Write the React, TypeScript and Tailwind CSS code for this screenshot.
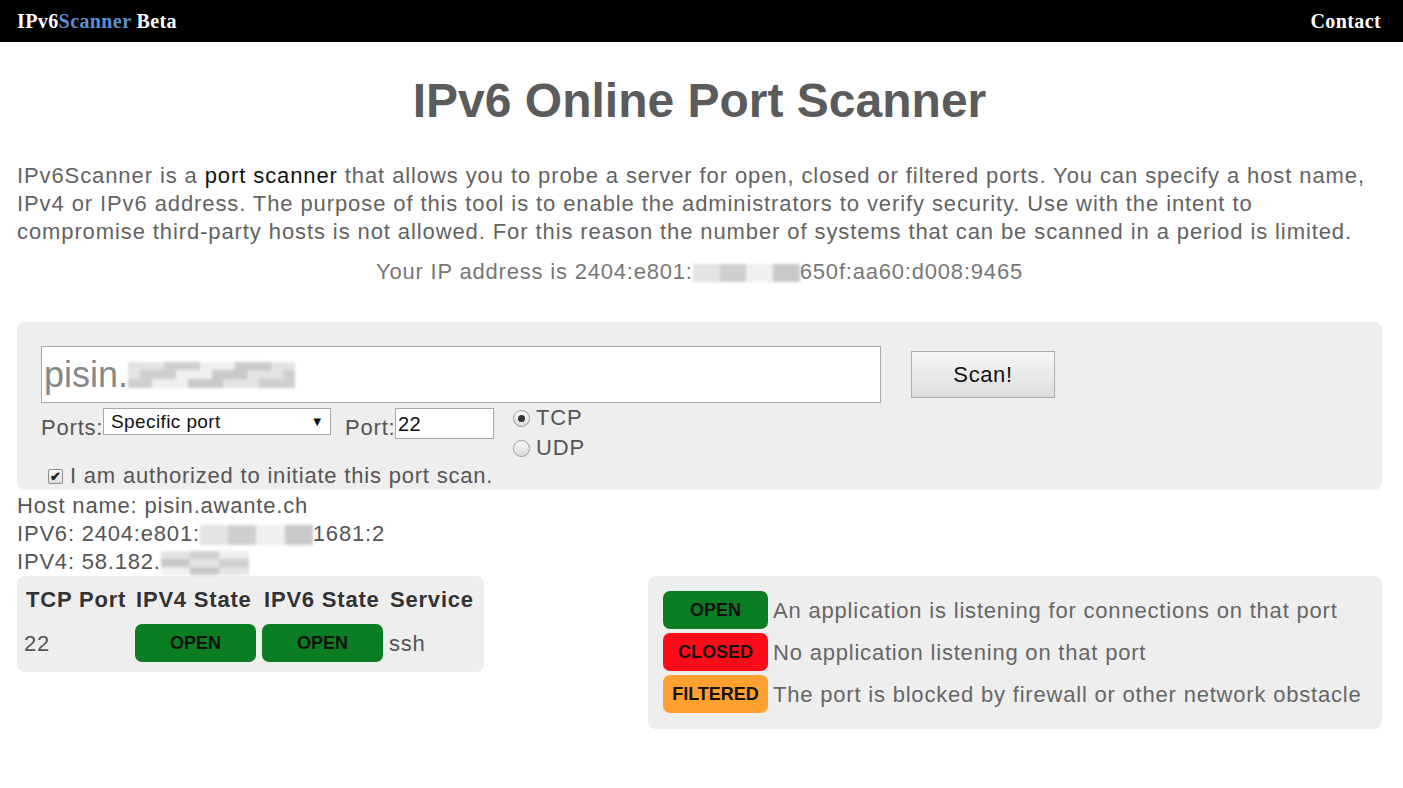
import React from "react";

const shades = ["#e3e3e3", "#d2d2d2", "#ececec", "#c9c9c9", "#e8e8e8", "#dadada", "#f0f0f0", "#d6d6d6", "#dedede", "#cfcfcf", "#e6e6e6", "#d8d8d8"];

function Blur({ cols, rows, className }: { cols: number; rows: number; className: string }) {
    const cells = Array.from({ length: cols * rows }, (_, i) => shades[(i * 7 + (i % 3) * 5) % shades.length]);
    return (
        <span className={`inline-grid align-middle blur-[1.5px] ${className}`} style={{ gridTemplateColumns: `repeat(${cols}, 1fr)` }}>
            {cells.map((c, i) => (
                <span key={i} style={{ background: c }} />
            ))}
        </span>
    );
}

function Badge({ label, color }: { label: string; color: string }) {
    return (
        <div className={`h-[38px] rounded-[7px] flex items-center justify-center font-bold text-[18px] text-[#111] ${color}`}>
            {label}
        </div>
    );
}

const legend = [
    { label: "OPEN", color: "bg-[#0b7d22]", text: "An application is listening for connections on that port" },
    { label: "CLOSED", color: "bg-[#ff0a1a]", text: "No application listening on that port" },
    { label: "FILTERED", color: "bg-[#ffa030]", text: "The port is blocked by firewall or other network obstacle" },
];

export default function App() {
    return (
        <div className="min-h-[788px] bg-white font-['Liberation_Sans',Arial,sans-serif]">
            <header className="h-[42px] bg-black flex items-center justify-between pl-[17px] pr-[22px] font-['Liberation_Serif','Times_New_Roman',serif] font-bold text-[20px] tracking-[0.4px] text-white">
                <div>
                    IPv6<span className="text-[#5b8fd0]">Scanner</span> Beta
                </div>
                <div>Contact</div>
            </header>

            <div className="pl-[17px] pr-[21px]">
                <h1 className="mt-[31px] text-center text-[48px] leading-[56px] font-bold text-[#5b5b5b]">IPv6 Online Port Scanner</h1>

                <p className="mt-[33px] pr-[10px] text-[22px] leading-[28px] tracking-[0.9px] text-[#636363]">
                    IPv6Scanner is a <span className="text-[#111]">port scanner</span> that allows you to probe a server for open, closed or filtered ports. You can specify a host name, IPv4 or IPv6 address. The purpose of this tool is to enable the administrators to verify security. Use with the intent to compromise third-party hosts is not allowed. For this reason the number of systems that can be scanned in a period is limited.
                </p>

                <p className="mt-[12px] text-center text-[22px] leading-[28px] tracking-[0.8px] text-[#777]">
                    Your IP address is 2404:e801:<Blur cols={12} rows={2} className="w-[107px] h-[18px]" />650f:aa60:d008:9465
                </p>

                <section className="mt-[36px] bg-[#eeeeee] rounded-[8px] pl-[24px] pt-[24px] h-[168px]">
                    <div className="flex items-start">
                        <div className="w-[840px] h-[57px] bg-white border border-[#a9a9a9] flex items-center pl-[2px] text-[36px] text-[#888]">
                            pisin.<Blur cols={14} rows={3} className="w-[167px] h-[26px]" />
                        </div>
                        <button className="ml-[30px] mt-[5px] w-[144px] h-[47px] border border-[#adadad] bg-gradient-to-b from-[#f7f7f7] to-[#dedede] text-[22px] tracking-[0.6px] text-[#111]">
                            Scan!
                        </button>
                    </div>

                    <div className="flex items-start mt-[1px] text-[22px] leading-[28px] tracking-[0.8px] text-[#555]">
                        <span className="mt-[10px] w-[62px]">Ports:</span>
                        <div className="mt-[4px] w-[228px] h-[27px] bg-white border border-[#a9a9a9] flex items-center justify-between pl-[7px] pr-[6px] text-[19px] tracking-[0.4px] text-[#111]">
                            <span>Specific port</span>
                            <span className="text-[13px]">▼</span>
                        </div>
                        <span className="ml-[14px] mt-[10px] w-[50px]">Port:</span>
                        <div className="mt-[4px] w-[99px] h-[31px] bg-white border border-[#a9a9a9] flex items-center pl-[2px] text-[20px] tracking-[0.4px] text-[#111]">
                            22
                        </div>
                        <div className="ml-[19px] flex flex-col gap-[2px]">
                            <label className="flex items-center">
                                <span className="w-[17px] h-[17px] rounded-full border border-[#9a9a9a] bg-gradient-to-b from-[#fafafa] to-[#dcdcdc] flex items-center justify-center">
                                    <span className="w-[7px] h-[7px] rounded-full bg-[#333]" />
                                </span>
                                <span className="ml-[6px]">TCP</span>
                            </label>
                            <label className="flex items-center">
                                <span className="w-[17px] h-[17px] rounded-full border border-[#9a9a9a] bg-gradient-to-b from-[#fafafa] to-[#dcdcdc]" />
                                <span className="ml-[6px]">UDP</span>
                            </label>
                        </div>
                    </div>

                    <label className="flex items-center ml-[7px] text-[22px] leading-[28px] tracking-[0.8px] text-[#555]">
                        <span className="w-[15px] h-[15px] border border-[#8f8f8f] rounded-[2px] bg-gradient-to-b from-[#fafafa] to-[#dcdcdc] flex items-center justify-center text-[13px] leading-none font-bold text-[#222]">
                            ✔
                        </span>
                        <span className="ml-[7px]">I am authorized to initiate this port scan.</span>
                    </label>
                </section>

                <div className="mt-[2px] text-[22px] leading-[28px] tracking-[0.8px] text-[#555]">
                    <div>Host name: pisin.awante.ch</div>
                    <div>
                        IPV6: 2404:e801:<Blur cols={12} rows={2} className="w-[113px] h-[20px]" />1681:2
                    </div>
                    <div>
                        IPV4: 58.182.<Blur cols={9} rows={3} className="w-[88px] h-[24px]" />
                    </div>
                </div>

                <div className="flex items-start justify-between">
                    <div className="w-[467px] h-[96px] bg-[#eeeeee] rounded-[8px] pl-[7px] pt-[10px]">
                        <div className="flex text-[22px] leading-[28px] tracking-[0.8px] font-bold text-[#333]">
                            <span className="w-[111px] pl-[2px]">TCP Port</span>
                            <span className="w-[128px] pl-[1px]">IPV4 State</span>
                            <span className="w-[127px] pl-[1px]">IPV6 State</span>
                            <span>Service</span>
                        </div>
                        <div className="flex items-center mt-[10px] text-[22px] tracking-[0.8px] text-[#555]">
                            <span className="w-[111px]">22</span>
                            <div className="w-[121px] tracking-normal"><Badge label="OPEN" color="bg-[#0b7d22]" /></div>
                            <div className="w-[121px] ml-[6px] tracking-normal"><Badge label="OPEN" color="bg-[#0b7d22]" /></div>
                            <span className="ml-[6px]">ssh</span>
                        </div>
                    </div>

                    <div className="w-[734px] h-[153px] bg-[#eeeeee] rounded-[8px] pl-[15px] pt-[15px] flex flex-col gap-[4px]">
                        {legend.map((l) => (
                            <div key={l.label} className="flex items-center">
                                <div className="w-[105px]"><Badge label={l.label} color={l.color} /></div>
                                <span className="ml-[5px] text-[22px] tracking-[0.8px] text-[#666]">{l.text}</span>
                            </div>
                        ))}
                    </div>
                </div>
            </div>
        </div>
    );
}
